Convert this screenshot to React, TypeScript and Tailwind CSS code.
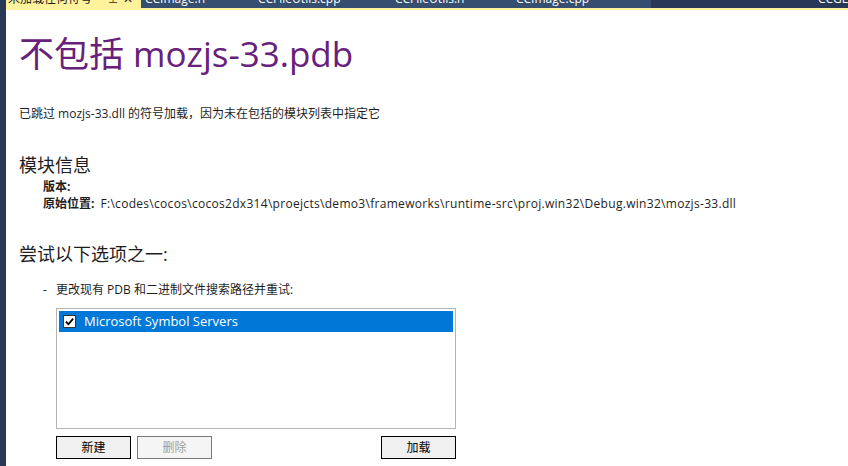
import React from "react";

const tabs = [
  { label: "CCImage.h", x: "w-[113px]" },
  { label: "CCFileUtils.cpp", x: "w-[137px]" },
  { label: "CCFileUtils.h", x: "w-[121px]" },
  { label: "CCImage.cpp", x: "w-[125px]" },
];

const font = "font-['Open_Sans','Noto_Sans_CJK_SC',sans-serif]";

const App = () => {
  return (
    <div className={`flex w-[848px] h-[466px] overflow-hidden bg-white ${font}`}>
      <div className="w-[6px] shrink-0 bg-[#293955]" />
      <div className="flex flex-col flex-1 min-w-0">
        {/* Tab strip (mostly scrolled out of view) */}
        <div className="flex h-[8px] overflow-hidden text-[12px] leading-[16px] text-white">
          <div className="flex w-[135px] shrink-0 bg-[#fff29d] text-[#1e1e1e] pl-[2px]">
            <span className="-mt-[9px]">未加载任何符号</span>
            <span className="-mt-[9px] ml-auto mr-[5px] text-[10px]">⊥</span>
            <span className="-mt-[9px] mr-[8px]">✕</span>
          </div>
          <div className="flex bg-[#364e6f]">
            {tabs.map((t) => (
              <div key={t.label} className={`${t.x} pl-[4px]`}>
                <span className="block -mt-[9px]">{t.label}</span>
              </div>
            ))}
            <div className="w-[14px]" />
          </div>
          <div className="flex-1 bg-[#293955] flex justify-end">
            <span className="block -mt-[9px] w-[30px] overflow-hidden whitespace-nowrap">CCGLView.cpp</span>
          </div>
        </div>
        <div className="h-[2px] bg-[#fff29d]" />

        {/* Content */}
        <div className="flex flex-col pl-[13px] text-[#1e1e1e]">
          <h1 className="mt-[22px] text-[35px] leading-[44px] text-[#68217a] font-normal">
            不包括 mozjs-33.pdb
          </h1>
          <p className="mt-[30px] text-[12px] leading-[16px]">
            已跳过 mozjs-33.dll 的符号加载，因为未在包括的模块列表中指定它
          </p>

          <h2 className="mt-[31px] text-[18px] leading-[24px]">模块信息</h2>
          <div className="mt-[1px] pl-[24px] text-[12px] leading-[17px]">
            <div className="font-bold">版本:</div>
            <div>
              <span className="font-bold">原始位置:</span>
              <span className="ml-[6px] tracking-[0.3px]">
                F:\codes\cocos\cocos2dx314\proejcts\demo3\frameworks\runtime-src\proj.win32\Debug.win32\mozjs-33.dll
              </span>
            </div>
          </div>

          <h2 className="mt-[30px] text-[18px] leading-[24px]">尝试以下选项之一:</h2>
          <div className="mt-[16px] flex pl-[24px] text-[12px] leading-[16px]">
            <span className="w-[13px]">-</span>
            <span>更改现有 PDB 和二进制文件搜索路径并重试:</span>
          </div>

          <div className="ml-[37px] mt-[10px] w-[400px] flex flex-col">
            <div className="h-[121px] border border-[#b4b4b4] p-[2px] bg-white">
              <div className="flex items-center h-[21px] bg-[#0078d7] text-white text-[13px] pl-[4px]">
                <div className="w-[13px] h-[13px] bg-white border border-[#333] flex items-center justify-center">
                  <svg viewBox="0 0 12 12" className="w-[11px] h-[11px]">
                    <path d="M2 6.2 L4.8 9 L10 2.8" fill="none" stroke="#000" strokeWidth="2" />
                  </svg>
                </div>
                <span className="ml-[8px]">Microsoft Symbol Servers</span>
              </div>
            </div>
            <div className="mt-[7px] flex text-[12px]">
              <button className="w-[75px] h-[23px] border border-black bg-[#f0f0f0] text-black">新建</button>
              <button className="ml-[6px] w-[75px] h-[23px] border border-[#7a7a7a] bg-[#f5f5f5] text-[#a0a0a0]">删除</button>
              <button className="ml-auto w-[75px] h-[23px] border border-black bg-[#f0f0f0] text-black">加载</button>
            </div>
          </div>
        </div>
      </div>
    </div>
  );
};

export default App;
